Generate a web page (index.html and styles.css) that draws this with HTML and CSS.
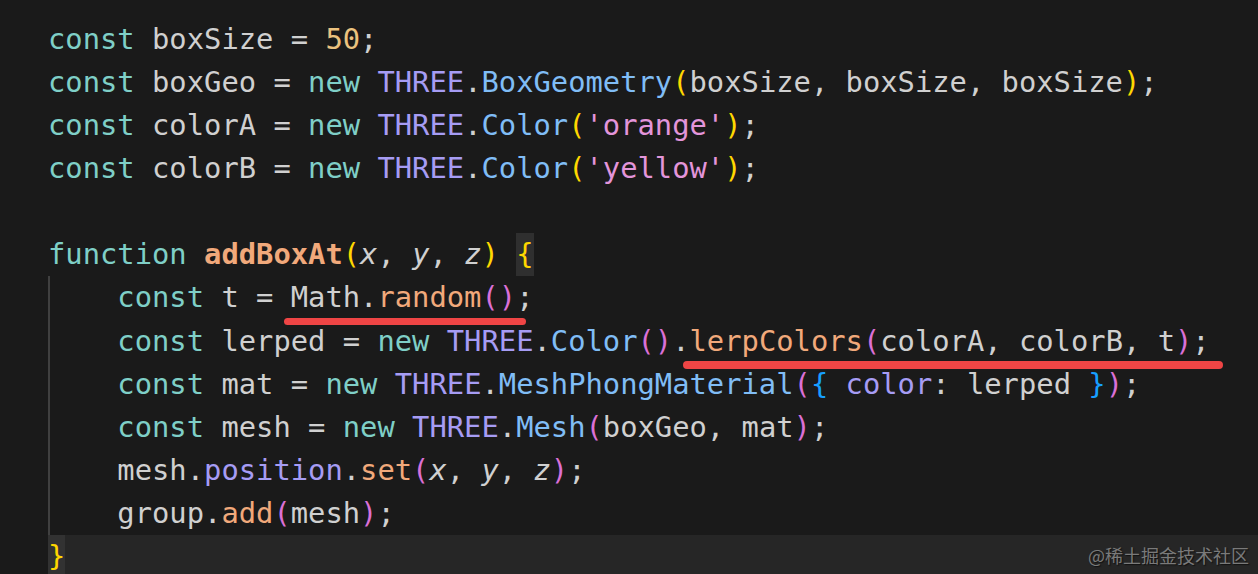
FILE: index.html
```html
<!DOCTYPE html>
<html>
<head>
<meta charset="utf-8">
<link rel="stylesheet" href="styles.css">
</head>
<body>
<div class="editor">
  <div class="code">
    <div class="ln"><span class="k">const</span> <span class="v">boxSize</span> = <span class="n">50</span>;</div>
    <div class="ln"><span class="k">const</span> <span class="v">boxGeo</span> = <span class="k">new</span> <span class="c">THREE</span>.<span class="f">BoxGeometry</span><span class="p1">(</span>boxSize, boxSize, boxSize<span class="p1">)</span>;</div>
    <div class="ln"><span class="k">const</span> <span class="v">colorA</span> = <span class="k">new</span> <span class="c">THREE</span>.<span class="f">Color</span><span class="p1">(</span><span class="s">'orange'</span><span class="p1">)</span>;</div>
    <div class="ln"><span class="k">const</span> <span class="v">colorB</span> = <span class="k">new</span> <span class="c">THREE</span>.<span class="f">Color</span><span class="p1">(</span><span class="s">'yellow'</span><span class="p1">)</span>;</div>
    <div class="ln"> </div>
    <div class="ln"><span class="k">function</span> <span class="o b">addBoxAt</span><span class="p1">(</span><span class="i">x</span>, <span class="i">y</span>, <span class="i">z</span><span class="p1">)</span> <span class="p1 match">{</span></div>
    <div class="block">
      <div class="ln">    <span class="k">const</span> t = Math.<span class="o">random</span><span class="p2">()</span>;</div>
      <div class="ln">    <span class="k">const</span> lerped = <span class="k">new</span> <span class="c">THREE</span>.<span class="f">Color</span><span class="p2">()</span>.<span class="o">lerpColors</span><span class="p2">(</span>colorA, colorB, t<span class="p2">)</span>;</div>
      <div class="ln">    <span class="k">const</span> mat = <span class="k">new</span> <span class="c">THREE</span>.<span class="f">MeshPhongMaterial</span><span class="p2">(</span><span class="p3">{</span> <span class="c">color</span>: lerped <span class="p3">}</span><span class="p2">)</span>;</div>
      <div class="ln">    <span class="k">const</span> mesh = <span class="k">new</span> <span class="c">THREE</span>.<span class="f">Mesh</span><span class="p2">(</span>boxGeo, mat<span class="p2">)</span>;</div>
      <div class="ln">    mesh.<span class="c">position</span>.<span class="o">set</span><span class="p2">(</span><span class="i">x</span>, <span class="i">y</span>, <span class="i">z</span><span class="p2">)</span>;</div>
      <div class="ln">    group.<span class="o">add</span><span class="p2">(</span>mesh<span class="p2">)</span>;</div>
    </div>
    <div class="ln current"><span class="p1 match2">}</span></div>
  </div>
  <div class="mark mark-1"></div>
  <div class="mark mark-2"></div>
  <div class="watermark">@稀土掘金技术社区</div>
</div>
</body>
</html>
```

FILE: styles.css
```css
html, body {
  margin: 0;
  padding: 0;
  background: #1a1a1a;
}

.editor {
  position: relative;
  width: 1258px;
  height: 574px;
  overflow: hidden;
  background: #1a1a1a;
}

.code {
  padding: 18px 0 0 48px;
  font-family: "DejaVu Sans Mono", "Liberation Mono", monospace;
  font-size: 28.8px;
  line-height: 43.08px;
  color: #d0d0d0;
}

.ln {
  height: 43.08px;
  white-space: pre;
}

.block {
  background: linear-gradient(#404040, #404040) no-repeat 0 0 / 2px 100%;
}

.current {
  background: #262626;
}

.k { color: #7fcfc7; }
.v { color: #d0d0d0; }
.n { color: #ebc27f; }
.c { color: #a69cf4; }
.f { color: #80bdf6; }
.o { color: #f1a97b; }
.b { font-weight: bold; }
.s { color: #e395da; }
.i { font-style: italic; }
.p1 { color: #ffd700; }
.p2 { color: #da70d6; }
.p3 { color: #179fff; }

.match {
  display: inline-block;
  height: 43.08px;
  vertical-align: top;
  background: #2f2f2f;
}

.match2 {
  display: inline-block;
  height: 43.08px;
  vertical-align: top;
  background: #323232;
}

.mark {
  position: absolute;
  background: #ef4545;
  border-radius: 4px;
}

.mark-1 {
  left: 284px;
  top: 318px;
  width: 242px;
  height: 7px;
}

.mark-2 {
  left: 683px;
  top: 361px;
  width: 540px;
  height: 8px;
}

.watermark {
  position: absolute;
  right: 9px;
  top: 544px;
  font-family: "Noto Sans CJK SC", sans-serif;
  font-size: 18px;
  line-height: 23px;
  color: #7a7a7a;
  text-shadow: 1px 1px 1px #111;
}
```
